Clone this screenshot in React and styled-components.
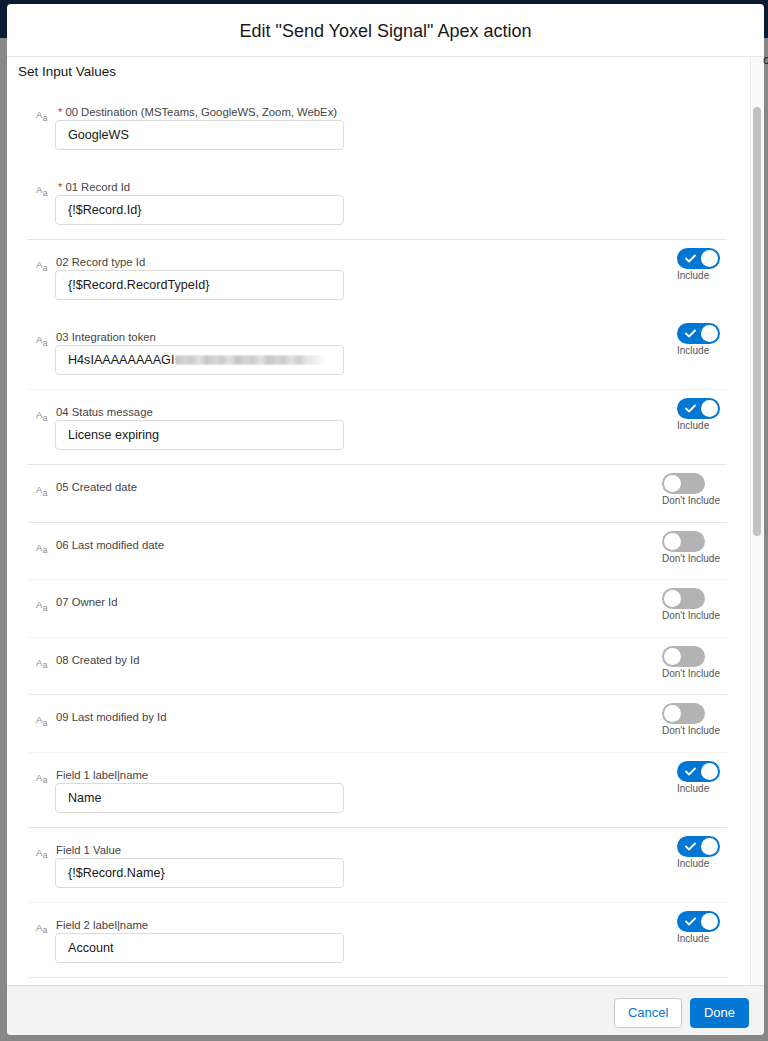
import React from 'react';
import styled, { createGlobalStyle, css } from 'styled-components';

const GlobalStyle = createGlobalStyle`
  html,
  body {
    margin: 0;
    padding: 0;
  }

  body {
    height: 1041px;
    overflow: hidden;
    background: linear-gradient(#0b1b34 0, #0b1b34 38px, #878787 38px);
    font-family: 'Liberation Sans', Arial, sans-serif;
    color: #181818;
  }

  * {
    box-sizing: border-box;
  }
`;

const Page = styled.div`
  position: relative;
  height: 1041px;
  padding: 4px 4px 6px 7px;
`;

const PeekText = styled.span`
  position: absolute;
  left: 763px;
  top: 52px;
  font-size: 13px;
  color: #222;
`;

const Modal = styled.div`
  display: flex;
  flex-direction: column;
  width: 757px;
  height: 1031px;
  background: #fff;
  border-radius: 4px;
  overflow: hidden;
`;

const Header = styled.header`
  display: flex;
  align-items: center;
  justify-content: center;
  height: 53px;
  padding-top: 2px;
  border-bottom: 1px solid #e5e5e5;
  flex-shrink: 0;
`;

const Title = styled.h1`
  margin: 0;
  font-size: 18px;
  font-weight: 400;
  color: #181818;
`;

const Body = styled.div`
  display: flex;
  flex: 1;
  min-height: 0;
`;

const Content = styled.div`
  flex: 1;
  overflow: hidden;
`;

const Track = styled.div`
  width: 14px;
  background: #fafafa;
  border-left: 1px solid #ececec;
  padding: 50px 0 0 2px;
`;

const Thumb = styled.div`
  width: 8px;
  height: 429px;
  border-radius: 4px;
  background: #c2c2c2;
`;

const SectionTitle = styled.h2`
  margin: 0;
  padding: 5px 11px 7px;
  font-size: 13.5px;
  line-height: 20px;
  font-weight: 400;
  color: #181818;
`;

const List = styled.div`
  margin: 0 23px 0 21px;
`;

const dividerColors = {
  strong: '#e5e5e5',
  faint: '#f3f3f3',
};

const Row = styled.div`
  display: flex;
  border-top: 1px solid ${p => dividerColors[p.$divider] || 'transparent'};
  padding: 8px 7px 14px 0;
`;

const IconCell = styled.div`
  width: 27px;
  padding: 6px 0 0 8px;
  flex-shrink: 0;
`;

const TypeIcon = styled.span`
  display: inline-flex;
  align-items: flex-start;
  height: 14px;
  color: #8a8a8a;
  font-size: 9.5px;
  line-height: 1;
  padding-top: 1px;

  span {
    font-size: 8.5px;
    margin-top: 3.5px;
    margin-left: 0.5px;
  }
`;

const Field = styled.div`
  flex: 1;
  padding-top: 7px;
`;

const Label = styled.div`
  font-size: 11.3px;
  line-height: 14px;
  color: #444;
  padding-left: 1px;
`;

const Required = styled.abbr`
  color: #c23934;
  text-decoration: none;
  margin: 0 3px 0 2px;
`;

const Input = styled.div`
  display: flex;
  align-items: center;
  width: 289px;
  height: 30px;
  margin-top: 1px;
  padding: 0 12px;
  border: 1px solid #dddbda;
  border-radius: 4px;
  font-size: 12.6px;
  color: #181818;
  white-space: nowrap;
  overflow: hidden;
`;

const Blur = styled.span`
  display: inline-block;
  width: 150px;
  height: 10px;
  margin-left: 1px;
  background: repeating-linear-gradient(
    90deg,
    #b9b9b9 0,
    #cfcfcf 9px,
    #c3c3c3 16px,
    #dedede 24px,
    #bdbdbd 31px
  );
  filter: blur(1.2px);
  opacity: 0.85;
  -webkit-mask-image: linear-gradient(90deg, #000 80%, transparent);
  mask-image: linear-gradient(90deg, #000 80%, transparent);
`;

const ToggleBlock = styled.div`
  display: flex;
  flex-direction: column;
  align-items: flex-start;
  padding-bottom: 0.5px;
`;

const ToggleTrack = styled.span`
  position: relative;
  display: block;
  width: 43px;
  height: 21px;
  border-radius: 11px;
  background: ${p => (p.$on ? '#0176d3' : '#b3b3b3')};

  &::after {
    content: '';
    position: absolute;
    top: 2px;
    width: 17px;
    height: 17px;
    border-radius: 50%;
    background: #fff;
    ${p =>
      p.$on
        ? css`
            right: 2px;
          `
        : css`
            left: 2px;
          `}
  }

  svg {
    position: absolute;
    left: 8px;
    top: 6px;
  }
`;

const ToggleCaption = styled.span`
  margin-top: 1px;
  font-size: 10px;
  line-height: 12px;
  color: #555;
`;

const Footer = styled.footer`
  display: flex;
  align-items: center;
  justify-content: flex-end;
  gap: 8px;
  height: 50px;
  flex-shrink: 0;
  padding: 4px 15px 0 0;
  background: #f3f3f3;
  border-top: 1px solid #dcdcdc;
`;

const Button = styled.button`
  height: 30px;
  padding: 0 ${p => (p.$brand ? '13px' : '12.5px')};
  border-radius: 4px;
  font-family: inherit;
  font-size: 13px;
  border: 1px solid ${p => (p.$brand ? '#0176d3' : '#c9c9c9')};
  background: ${p => (p.$brand ? '#0176d3' : '#fff')};
  color: ${p => (p.$brand ? '#fff' : '#0176d3')};
`;

const Check = () => (
  <svg width="11" height="9" viewBox="0 0 11 9">
    <path d="M1 4.5 L4 7.5 L10 1.5" fill="none" stroke="#fff" strokeWidth="1.8" strokeLinecap="round" strokeLinejoin="round" />
  </svg>
);

const Toggle = ({ on }) => (
  <ToggleBlock>
    <ToggleTrack $on={on}>{on && <Check />}</ToggleTrack>
    <ToggleCaption>{on ? 'Include' : "Don't Include"}</ToggleCaption>
  </ToggleBlock>
);

const fields = [
  { label: '00 Destination (MSTeams, GoogleWS, Zoom, WebEx)', required: true, value: 'GoogleWS' },
  { label: '01 Record Id', required: true, value: '{!$Record.Id}' },
  { label: '02 Record type Id', value: '{!$Record.RecordTypeId}', on: true, divider: 'strong' },
  { label: '03 Integration token', token: 'H4sIAAAAAAAAGI', on: true },
  { label: '04 Status message', value: 'License expiring', on: true, divider: 'faint' },
  { label: '05 Created date', divider: 'strong' },
  { label: '06 Last modified date', divider: 'strong' },
  { label: '07 Owner Id', divider: 'faint' },
  { label: '08 Created by Id', divider: 'faint' },
  { label: '09 Last modified by Id', divider: 'strong' },
  { label: 'Field 1 label|name', value: 'Name', on: true, divider: 'faint' },
  { label: 'Field 1 Value', value: '{!$Record.Name}', on: true, divider: 'strong' },
  { label: 'Field 2 label|name', value: 'Account', on: true, divider: 'faint' },
  { label: 'Field 2 Value', value: '{!$Record.Account.Name}', on: true, divider: 'strong' },
];

const FieldRow = ({ field }) => {
  const hasInput = field.value !== undefined || field.token;
  return (
    <Row $divider={field.divider}>
      <IconCell>
        <TypeIcon>
          A<span>a</span>
        </TypeIcon>
      </IconCell>
      <Field>
        <Label>
          {field.required && <Required title="required">*</Required>}
          {field.label}
        </Label>
        {hasInput && (
          <Input>
            {field.token ? (
              <>
                {field.token}
                <Blur />
              </>
            ) : (
              field.value
            )}
          </Input>
        )}
      </Field>
      {!field.required && <Toggle on={!!field.on} />}
    </Row>
  );
};

const App = () => (
  <>
    <GlobalStyle />
    <Page>
      <PeekText>c</PeekText>
      <Modal>
        <Header>
          <Title>Edit "Send Yoxel Signal" Apex action</Title>
        </Header>
        <Body>
          <Content>
            <SectionTitle>Set Input Values</SectionTitle>
            <List>
              {fields.map(field => (
                <FieldRow key={field.label} field={field} />
              ))}
            </List>
          </Content>
          <Track>
            <Thumb />
          </Track>
        </Body>
        <Footer>
          <Button>Cancel</Button>
          <Button $brand>Done</Button>
        </Footer>
      </Modal>
    </Page>
  </>
);

export default App;
